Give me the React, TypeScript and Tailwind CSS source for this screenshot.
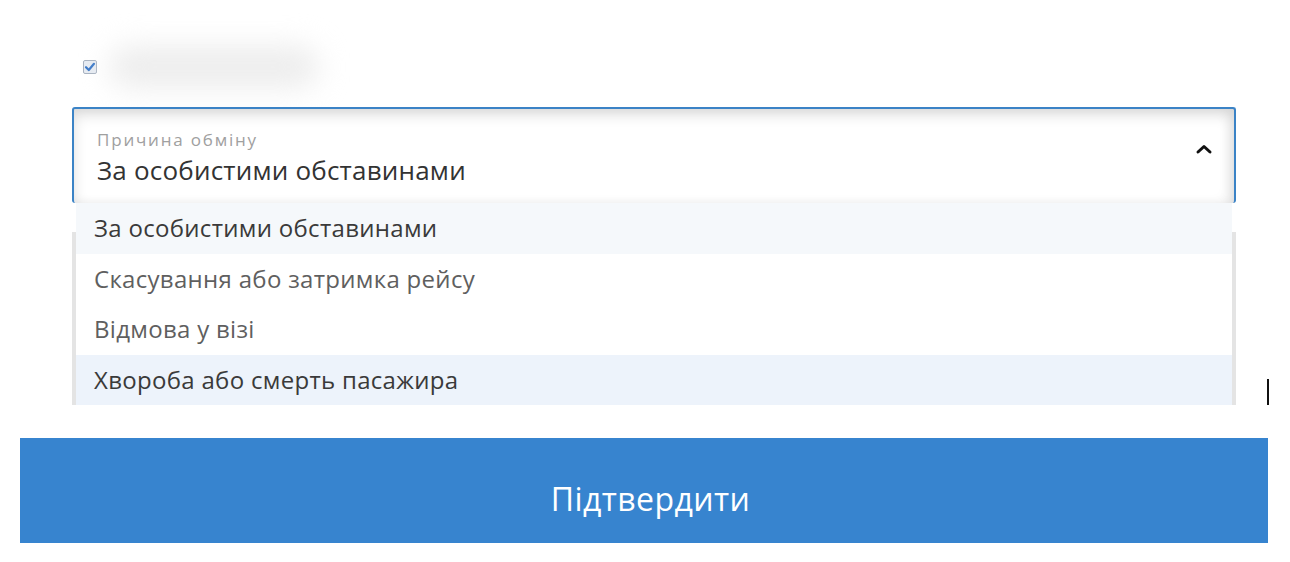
import React from 'react'

const options = [
  'За особистими обставинами',
  'Скасування або затримка рейсу',
  'Відмова у візі',
  'Хвороба або смерть пасажира',
]

function CheckIcon() {
  return (
    <svg width="14" height="14" viewBox="0 0 14 14">
      <rect x="0.5" y="0.5" width="13" height="13" rx="1.5" fill="#e6ebf2" stroke="#a7b2c0" />
      <path d="M3 7.2 L5.8 10 L11 3.8" fill="none" stroke="#3a78c8" strokeWidth="2.2" strokeLinecap="round" strokeLinejoin="round" />
    </svg>
  )
}

function ChevronUp() {
  return (
    <svg width="18" height="12" viewBox="0 0 18 12">
      <path d="M3 9 L9 3.5 L15 9" fill="none" stroke="#111" strokeWidth="3" strokeLinecap="round" strokeLinejoin="round" />
    </svg>
  )
}

export default function App() {
  const selected = 0
  const hovered = 3

  return (
    <div className="w-[1290px] h-[562px] bg-white pl-[20px] pr-[22px] pt-[59px] overflow-hidden" style={{ fontFamily: '"Open Sans", "Noto Sans", sans-serif' }}>
      {/* Consent checkbox, label is blurred */}
      <div className="ml-[63px] flex items-center h-[16px]">
        <CheckIcon />
        <div className="ml-[12px] h-[42px] w-[210px] rounded-full bg-[#ededed] blur-[14px]" />
      </div>

      {/* Reason select, opened */}
      <div className="relative mt-[32px] ml-[52px] mr-[32px]">
        <div className="h-[96px] rounded-[3px] border-2 border-b-0 border-[#3b83c6] bg-white shadow-[inset_0_6px_14px_rgba(0,0,0,0.13),inset_-6px_0_12px_rgba(0,0,0,0.06)] flex pl-[23px] pr-[20px]">
          <div className="flex-1 pt-[20px]">
            <div className="text-[17px] leading-[22px] tracking-[1.8px] text-[#a0a0a0]">Причина обміну</div>
            <div className="text-[26px] leading-[38px] tracking-[0.2px] text-[#333]">{options[selected]}</div>
          </div>
          <div className="pt-[34px] pr-[1px]">
            <ChevronUp />
          </div>
        </div>

        {/* field underneath the list */}
        <div className="mt-[29px] h-[173px] border-x-4 border-[#e4e4e4] bg-white" />

        <ul className="absolute left-[4px] right-[4px] top-[96px]">
          {options.map((o, i) => (
            <li
              key={o}
              className={
                'h-[50.5px] flex items-center pl-[18px] text-[24px] tracking-[0.3px] ' +
                (i === selected ? 'bg-[#f5f8fb] text-[#3a3a3a]' : i === hovered ? 'bg-[#edf3fb] text-[#3a3a3a]' : 'bg-white text-[#5f5f5f]')
              }
            >
              {o}
            </li>
          ))}
        </ul>

        <div className="absolute right-[-33px] bottom-0 h-[26px] w-[2px] bg-[#111]" />
      </div>

      <button className="mt-[33px] w-full h-[105px] bg-[#3784cf] text-white text-[32px] tracking-[0.4px] pt-[16px] pl-[13px]">
        Підтвердити
      </button>
    </div>
  )
}
